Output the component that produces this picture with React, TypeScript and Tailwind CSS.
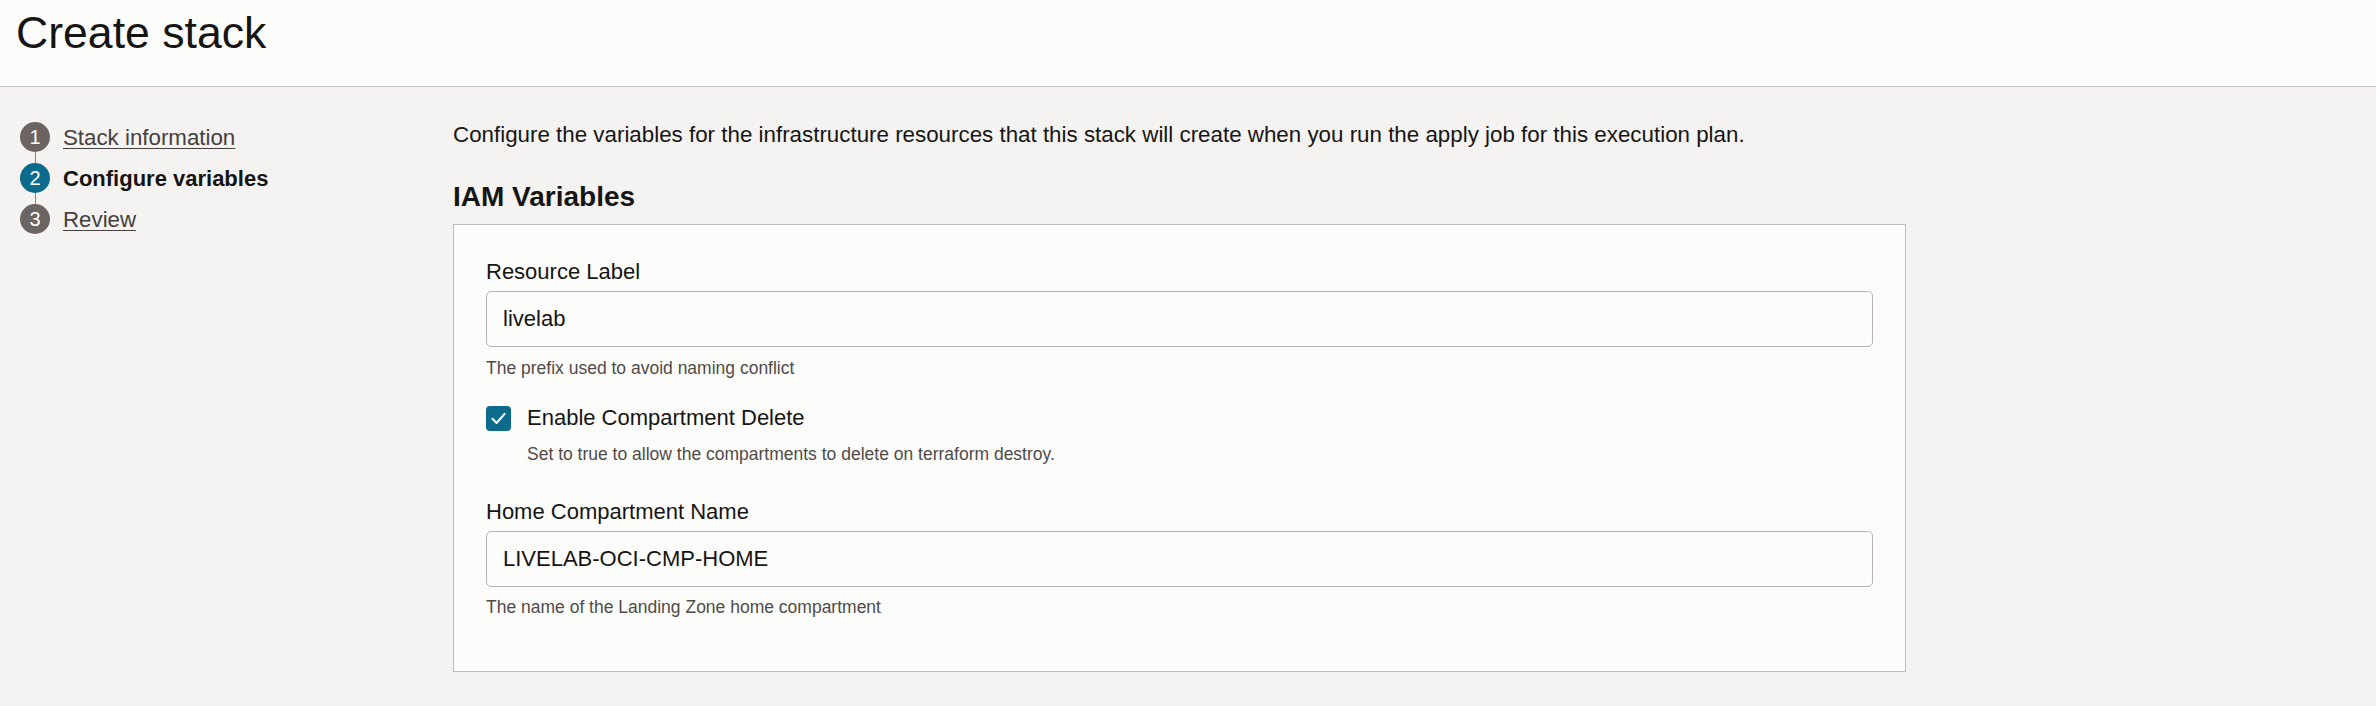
import React from "react";

const steps = [
  { n: 1, label: "Stack information", state: "done" },
  { n: 2, label: "Configure variables", state: "active" },
  { n: 3, label: "Review", state: "todo" },
];

function Step({ n, label, state }: { n: number; label: string; state: string }) {
  const active = state === "active";
  return (
    <div className="flex h-[30px] items-start gap-[13px]">
      <div
        className={
          active
            ? "flex h-[30px] w-[30px] shrink-0 items-center justify-center rounded-full bg-[#0c6a8d] text-[20px] leading-none text-white"
            : "flex h-[30px] w-[30px] shrink-0 items-center justify-center rounded-full bg-[#6b6461] text-[20px] leading-none text-white"
        }
      >
        {n}
      </div>
      {active ? (
        <span className="text-[22px] font-bold leading-[32px] text-[#161513]">{label}</span>
      ) : (
        <span className="text-[22.3px] leading-[32px] text-[#45403d] underline underline-offset-[3px] decoration-[1px]">
          {label}
        </span>
      )}
    </div>
  );
}

function Connector() {
  return <div className="ml-[14.5px] h-[11px] w-px bg-[#8d8885]" />;
}

function TextField({ label, value, help }: { label: string; value: string; help: string }) {
  return (
    <div className="flex flex-col">
      <label className="text-[22px] leading-[30px] text-[#161513]">{label}</label>
      <div className="mt-[4px] flex h-[56px] items-center rounded-[5px] border border-[#b9b4b1] bg-[#fcfcfb] px-[16px]">
        <span className="text-[22px] leading-[30px] text-[#161513]">{value}</span>
      </div>
      <p className="mt-[8.5px] text-[17.5px] leading-[24px] text-[#4f4b48]">{help}</p>
    </div>
  );
}

export default function App() {
  return (
    <div className="min-h-[706px] bg-[#f4f3f1] font-['Liberation_Sans',Arial,sans-serif] text-[#161513]">
      <header className="h-[87px] border-b border-[#c6c4c1] bg-[#fcfcfb] pl-[16px] pt-[7px]">
        <h1 className="text-[44.6px] font-normal leading-[52px] text-[#161513]">Create stack</h1>
      </header>
      <div className="flex">
        <nav className="w-[453px] shrink-0 pl-[20px] pt-[34.5px]">
          <Step {...steps[0]} />
          <Connector />
          <Step {...steps[1]} />
          <Connector />
          <Step {...steps[2]} />
        </nav>
        <main className="w-[1453px] pt-[33px]">
          <p className="text-[22.35px] leading-[30px] text-[#161513]">
            Configure the variables for the infrastructure resources that this stack will create when you run the apply job for this execution plan.
          </p>
          <h2 className="mt-[29px] text-[28px] font-bold leading-[36px] text-[#161513]">IAM Variables</h2>
          <section className="mt-[9px] border border-[#bebcb9] bg-[#fcfcfb] px-[32px] pb-[52px] pt-[32px]">
            <TextField
              label="Resource Label"
              value="livelab"
              help="The prefix used to avoid naming conflict"
            />
            <div className="mt-[23.5px] flex h-[30px] items-center gap-[16px]">
              <div className="flex h-[25px] w-[25px] items-center justify-center rounded-[4px] bg-[#0c6a8d]">
                <svg width="17" height="17" viewBox="0 0 17 17" fill="none">
                  <path d="M2.5 8.8 L6.6 13 L14.6 3.8" stroke="#ffffff" strokeWidth="2" strokeLinecap="round" strokeLinejoin="round" />
                </svg>
              </div>
              <span className="text-[22px] leading-[30px] text-[#161513]">Enable Compartment Delete</span>
            </div>
            <p className="ml-[41px] mt-[9px] text-[17.5px] leading-[24px] text-[#4f4b48]">
              Set to true to allow the compartments to delete on terraform destroy.
            </p>
            <div className="mt-[30.5px]">
              <TextField
                label="Home Compartment Name"
                value="LIVELAB-OCI-CMP-HOME"
                help="The name of the Landing Zone home compartment"
              />
            </div>
          </section>
        </main>
      </div>
    </div>
  );
}
